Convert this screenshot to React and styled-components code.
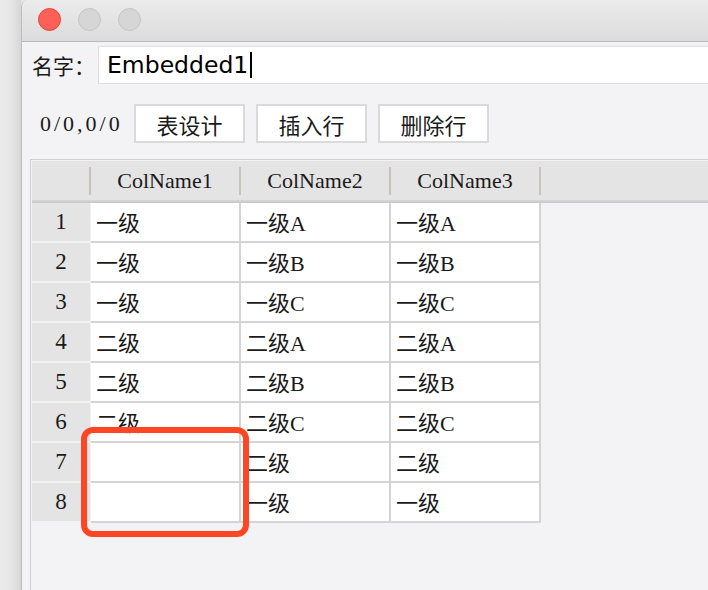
import React from "react";
import styled, { createGlobalStyle } from "styled-components";

const Global = createGlobalStyle`
  html, body { margin: 0; padding: 0; }
  body {
    width: 708px;
    height: 590px;
    overflow: hidden;
    background: #e6e6e6;
    font-family: "Noto Sans CJK SC", sans-serif;
  }
`;

const Screen = styled.div`
  position: relative;
  display: flex;
  width: 708px;
  height: 590px;
  overflow: hidden;
`;

const Desktop = styled.div`
  width: 21px;
  flex-shrink: 0;
  background: linear-gradient(to right, #ebebeb 0%, #e4e4e4 60%, #d6d6d6 100%);
`;

const Window = styled.div`
  flex: 1;
  display: flex;
  flex-direction: column;
  background: #f3f3f5;
  border-left: 1px solid #bdbdbd;
  border-top-left-radius: 7px;
  overflow: hidden;
`;

const TitleBar = styled.div`
  flex-shrink: 0;
  display: flex;
  align-items: center;
  gap: 17px;
  padding-left: 16px;
  background: linear-gradient(to bottom, #ebebeb 0%, #dcdcdc 100%);
  border-bottom: 1px solid #b9b9b9;
  box-sizing: border-box;
  height: 42px;
`;

const Light = styled.span`
  width: 23px;
  height: 23px;
  border-radius: 50%;
  box-sizing: border-box;
  background: ${(p) => (p.$red ? "#fe5f57" : "#d6d6d6")};
  border: 1px solid ${(p) => (p.$red ? "#e2463f" : "#c4c4c4")};
  margin-top: -2px;
`;

const NameRow = styled.div`
  display: flex;
  align-items: center;
  margin-top: 4px;
  padding-left: 10px;
  height: 38px;
`;

const Label = styled.span`
  width: 66px;
  flex-shrink: 0;
  font-family: "Noto Sans CJK SC", sans-serif;
  font-size: 21px;
  color: #1a1a1a;
  line-height: 38px;
`;

const NameInput = styled.div`
  flex: 1;
  height: 38px;
  box-sizing: border-box;
  background: #ffffff;
  border: 1px solid #dedede;
  border-right: none;
  display: flex;
  align-items: center;
  padding-left: 8px;
  font-family: "DejaVu Sans", sans-serif;
  font-size: 23.5px;
  color: #000;
`;

const Caret = styled.span`
  display: inline-block;
  width: 2px;
  height: 26px;
  background: #000;
  margin-left: 2px;
`;

const Toolbar = styled.div`
  display: flex;
  align-items: center;
  margin-top: 20px;
  padding-left: 18px;
  gap: 11px;
  height: 39px;
`;

const Counter = styled.span`
  font-family: "Liberation Serif", serif;
  font-size: 22px;
  letter-spacing: 3px;
  color: #1a1a1a;
  width: 84px;
  white-space: nowrap;
  margin-right: -1px;
`;

const Button = styled.div`
  width: 111px;
  height: 39px;
  box-sizing: border-box;
  background: #ffffff;
  border: 2px solid #dadada;
  display: flex;
  align-items: center;
  justify-content: center;
  font-family: "Noto Sans CJK SC", sans-serif;
  font-size: 22px;
  color: #1a1a1a;
`;

const Pane = styled.div`
  flex: 1;
  margin-top: 16px;
  margin-left: 8px;
  border-top: 1px solid #cfcfcf;
  border-left: 1px solid #cfcfcf;
  padding-top: 1px;
  padding-left: 1px;
  background: #f3f3f5;
`;

const HeaderRow = styled.div`
  display: flex;
  background: #e4e4e4;
  padding-top: 6px;
  padding-bottom: 5px;
`;

const HeadCell = styled.div`
  width: ${(p) => p.$w}px;
  height: 28px;
  box-sizing: border-box;
  border-right: 2px solid #c7c3bb;
  display: flex;
  align-items: center;
  justify-content: center;
  font-family: "Liberation Serif", serif;
  font-size: 22px;
  color: #1a1a1a;
`;

const HeaderBand = styled.div`
  height: 3px;
  background: linear-gradient(to bottom, #d8d8d8, #c6c6c6);
`;

const Grid = styled.div`
  display: grid;
  grid-template-columns: 59px 150px 150px 150px;
  grid-auto-rows: 40px;
  width: 509px;
`;

const RowHead = styled.div`
  box-sizing: border-box;
  background: #e4e4e4;
  border-bottom: 2px solid #f2f2f2;
  border-right: 1px solid #f2f2f2;
  display: flex;
  align-items: center;
  justify-content: center;
  padding-bottom: 1px;
  font-family: "Liberation Serif", serif;
  font-size: 23px;
  color: #1a1a1a;
`;

const Cell = styled.div`
  box-sizing: border-box;
  background: #ffffff;
  border-right: 2px solid #d4d4d4;
  border-bottom: 2px solid #d4d4d4;
  display: flex;
  align-items: center;
  padding-left: 5px;
  padding-bottom: 2px;
  font-family: "Liberation Serif", "Noto Sans CJK SC", serif;
  font-size: 22px;
  color: #1a1a1a;
  white-space: nowrap;
`;

const Highlight = styled.div`
  position: absolute;
  left: 81px;
  top: 427px;
  width: 168px;
  height: 110px;
  box-sizing: border-box;
  border: 6px solid #ff4624;
  border-radius: 12px;
  pointer-events: none;
`;

const rows = [
  ["一级", "一级A", "一级A"],
  ["一级", "一级B", "一级B"],
  ["一级", "一级C", "一级C"],
  ["二级", "二级A", "二级A"],
  ["二级", "二级B", "二级B"],
  ["二级", "二级C", "二级C"],
  ["", "二级", "二级"],
  ["", "一级", "一级"],
];

export default function App() {
  return (
    <>
      <Global />
      <Screen>
        <Desktop />
        <Window>
          <TitleBar>
            <Light $red />
            <Light />
            <Light />
          </TitleBar>
          <NameRow>
            <Label>名字：</Label>
            <NameInput>
              Embedded1
              <Caret />
            </NameInput>
          </NameRow>
          <Toolbar>
            <Counter>0/0,0/0</Counter>
            <Button>表设计</Button>
            <Button>插入行</Button>
            <Button>删除行</Button>
          </Toolbar>
          <Pane>
            <HeaderRow>
              <HeadCell $w={59} />
              <HeadCell $w={150}>ColName1</HeadCell>
              <HeadCell $w={150}>ColName2</HeadCell>
              <HeadCell $w={150}>ColName3</HeadCell>
            </HeaderRow>
            <HeaderBand />
            <Grid>
              {rows.map((r, i) => (
                <React.Fragment key={i}>
                  <RowHead>{i + 1}</RowHead>
                  {r.map((c, j) => (
                    <Cell key={j}>{c}</Cell>
                  ))}
                </React.Fragment>
              ))}
            </Grid>
          </Pane>
        </Window>
        <Highlight />
      </Screen>
    </>
  );
}
